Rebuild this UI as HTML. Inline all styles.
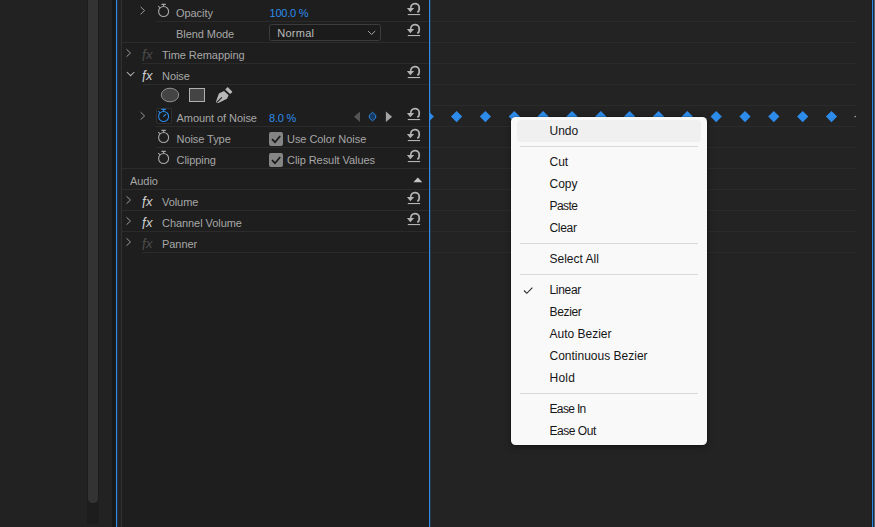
<!DOCTYPE html>
<html><head><meta charset="utf-8"><title>Effect Controls</title>
<style>
html,body{margin:0;padding:0;}
body{width:875px;height:527px;overflow:hidden;background:#222;position:relative;font-family:"Liberation Sans",sans-serif;}
.abs{position:absolute;}
.t{position:absolute;font-size:11px;line-height:16px;white-space:nowrap;letter-spacing:-0.06px;}
.fx{position:absolute;font-size:13px;line-height:18px;font-style:italic;letter-spacing:0.4px;}
.fx .f{display:inline-block;transform:translateY(1.2px) scaleY(1.28);transform-origin:50% 64%;}
#menu{position:absolute;left:511px;top:117px;width:196px;height:328px;background:#f9f9f9;border-radius:4.5px;box-shadow:0 2px 6px rgba(0,0,0,.35),0 0 0 0.5px rgba(0,0,0,.25);}
.mi{position:absolute;left:6px;width:184px;height:22px;line-height:23px;font-size:12px;color:#161616;text-indent:32.5px;border-radius:4px;white-space:nowrap;}
.mi.hl{background:#f0f0f0;}
.sep{position:absolute;left:9px;width:178px;height:1px;background:#d9d9d9;}
</style></head><body>
<div class="abs" style="left:87px;top:0;width:12px;height:524px;background:#1d1d1d"></div>
<div class="abs" style="left:88px;top:-10px;width:10px;height:513px;background:#333;border-radius:4.5px"></div>
<div class="abs" style="left:112px;top:0;width:4px;height:527px;background:#181818"></div>
<div class="abs" style="left:115px;top:0;width:1px;height:527px;background:#211c17"></div>
<div class="abs" style="left:116px;top:0;width:1px;height:527px;background:#2e8ae6"></div>
<div class="abs" style="left:117px;top:0;width:1px;height:527px;background:#23303f"></div>
<div class="abs" style="left:121px;top:0;width:1px;height:527px;background:#303030"></div>
<div class="abs" style="left:122px;top:0;width:307px;height:527px;background:#1e1e1e"></div>
<div class="abs" style="left:430px;top:0;width:442px;height:527px;background:#232323"></div>
<div class="abs" style="left:428px;top:0;width:1px;height:527px;background:#221d18"></div>
<div class="abs" style="left:429px;top:0;width:1px;height:527px;background:#2e8ae6"></div>
<div class="abs" style="left:430px;top:0;width:1px;height:527px;background:#24364d"></div>
<div class="abs" style="left:871px;top:0;width:1px;height:527px;background:#231d17"></div>
<div class="abs" style="left:872px;top:0;width:1px;height:527px;background:#2e8ae6"></div>
<div class="abs" style="left:873px;top:0;width:1px;height:527px;background:#1c2a3a"></div>
<div class="abs" style="left:874px;top:0;width:1px;height:527px;background:#5c606a"></div>
<svg class="abs" style="left:0;top:0" width="875" height="527" viewBox="0 0 875 527">
<rect x="156" y="21" width="273" height="1" fill="#2b2b2b"/><rect x="122" y="42" width="307" height="1" fill="#2b2b2b"/><rect x="142" y="63" width="287" height="1" fill="#2b2b2b"/><rect x="142" y="84" width="287" height="1" fill="#2b2b2b"/><rect x="156" y="126" width="273" height="1" fill="#2b2b2b"/><rect x="156" y="147" width="273" height="1" fill="#2b2b2b"/><rect x="122" y="168" width="307" height="1" fill="#2b2b2b"/><rect x="122" y="189" width="307" height="1" fill="#2b2b2b"/><rect x="122" y="210" width="307" height="1" fill="#2b2b2b"/><rect x="122" y="231" width="307" height="1" fill="#2b2b2b"/><rect x="142" y="252" width="287" height="1" fill="#2b2b2b"/><rect x="431" y="21" width="425" height="1" fill="#2b2b2b"/><rect x="431" y="42" width="425" height="1" fill="#2b2b2b"/><rect x="431" y="63" width="425" height="1" fill="#2b2b2b"/><rect x="431" y="84" width="425" height="1" fill="#2b2b2b"/><rect x="431" y="105" width="425" height="1" fill="#2b2b2b"/><rect x="431" y="126" width="425" height="1" fill="#2b2b2b"/><rect x="431" y="147" width="425" height="1" fill="#2b2b2b"/><rect x="431" y="168" width="425" height="1" fill="#2b2b2b"/><rect x="431" y="189" width="425" height="1" fill="#2b2b2b"/><rect x="431" y="210" width="425" height="1" fill="#2b2b2b"/><rect x="431" y="231" width="425" height="1" fill="#2b2b2b"/><rect x="431" y="252" width="425" height="1" fill="#2b2b2b"/><g transform="translate(0,0)"><path d="M410.8 7.9A4.2 4.2 0 0 1 419.2 7.6V9.3A3.3 3.3 0 0 1 417.3 12.3" fill="none" stroke="#b4b4b4" stroke-width="1.75"/><path d="M406.9 7.9L414.2 8.1L410.3 12.3Z" fill="#b4b4b4"/><rect x="407.8" y="14" width="12.3" height="1.1" fill="#b4b4b4"/></g><g transform="translate(0,21)"><path d="M410.8 7.9A4.2 4.2 0 0 1 419.2 7.6V9.3A3.3 3.3 0 0 1 417.3 12.3" fill="none" stroke="#b4b4b4" stroke-width="1.75"/><path d="M406.9 7.9L414.2 8.1L410.3 12.3Z" fill="#b4b4b4"/><rect x="407.8" y="14" width="12.3" height="1.1" fill="#b4b4b4"/></g><g transform="translate(0,63)"><path d="M410.8 7.9A4.2 4.2 0 0 1 419.2 7.6V9.3A3.3 3.3 0 0 1 417.3 12.3" fill="none" stroke="#b4b4b4" stroke-width="1.75"/><path d="M406.9 7.9L414.2 8.1L410.3 12.3Z" fill="#b4b4b4"/><rect x="407.8" y="14" width="12.3" height="1.1" fill="#b4b4b4"/></g><g transform="translate(0,105)"><path d="M410.8 7.9A4.2 4.2 0 0 1 419.2 7.6V9.3A3.3 3.3 0 0 1 417.3 12.3" fill="none" stroke="#b4b4b4" stroke-width="1.75"/><path d="M406.9 7.9L414.2 8.1L410.3 12.3Z" fill="#b4b4b4"/><rect x="407.8" y="14" width="12.3" height="1.1" fill="#b4b4b4"/></g><g transform="translate(0,126)"><path d="M410.8 7.9A4.2 4.2 0 0 1 419.2 7.6V9.3A3.3 3.3 0 0 1 417.3 12.3" fill="none" stroke="#b4b4b4" stroke-width="1.75"/><path d="M406.9 7.9L414.2 8.1L410.3 12.3Z" fill="#b4b4b4"/><rect x="407.8" y="14" width="12.3" height="1.1" fill="#b4b4b4"/></g><g transform="translate(0,147)"><path d="M410.8 7.9A4.2 4.2 0 0 1 419.2 7.6V9.3A3.3 3.3 0 0 1 417.3 12.3" fill="none" stroke="#b4b4b4" stroke-width="1.75"/><path d="M406.9 7.9L414.2 8.1L410.3 12.3Z" fill="#b4b4b4"/><rect x="407.8" y="14" width="12.3" height="1.1" fill="#b4b4b4"/></g><g transform="translate(0,189)"><path d="M410.8 7.9A4.2 4.2 0 0 1 419.2 7.6V9.3A3.3 3.3 0 0 1 417.3 12.3" fill="none" stroke="#b4b4b4" stroke-width="1.75"/><path d="M406.9 7.9L414.2 8.1L410.3 12.3Z" fill="#b4b4b4"/><rect x="407.8" y="14" width="12.3" height="1.1" fill="#b4b4b4"/></g><g transform="translate(0,210)"><path d="M410.8 7.9A4.2 4.2 0 0 1 419.2 7.6V9.3A3.3 3.3 0 0 1 417.3 12.3" fill="none" stroke="#b4b4b4" stroke-width="1.75"/><path d="M406.9 7.9L414.2 8.1L410.3 12.3Z" fill="#b4b4b4"/><rect x="407.8" y="14" width="12.3" height="1.1" fill="#b4b4b4"/></g><g transform="translate(0,0)" fill="none" stroke="#a8a8a8" stroke-width="1.1"><circle cx="163.6" cy="11.5" r="5"/><path d="M161.4 4.4H165.8M163.6 4.4V6.4M158.2 6.1L159.9 7.6"/></g><g transform="translate(0,126)" fill="none" stroke="#a8a8a8" stroke-width="1.1"><circle cx="163.6" cy="11.5" r="5"/><path d="M161.4 4.4H165.8M163.6 4.4V6.4M158.2 6.1L159.9 7.6"/></g><g transform="translate(0,147)" fill="none" stroke="#a8a8a8" stroke-width="1.1"><circle cx="163.6" cy="11.5" r="5"/><path d="M161.4 4.4H165.8M163.6 4.4V6.4M158.2 6.1L159.9 7.6"/></g><rect x="156.5" y="108.5" width="15" height="15" rx="1.5" fill="#191919" stroke="#303030"/><g transform="translate(0,105)" fill="none" stroke="#2d8ceb" stroke-width="1.1"><circle cx="163.6" cy="11.5" r="5"/><path d="M161.4 4.4H165.8M163.6 4.4V6.4M158.2 6.1L159.9 7.6"/></g><path d="M163.3 116.6L166 114.1" stroke="#2d8ceb" stroke-width="1.2"/><path d="M140.6 6.9l4 3.7l-4 3.7" fill="none" stroke="#9a9a9a" stroke-width="1"/><path d="M126.5 49.3l4 3.7l-4 3.7" fill="none" stroke="#9a9a9a" stroke-width="1"/><path d="M126.9 72l3.7 3.7l3.7 -3.7" fill="none" stroke="#b0b0b0" stroke-width="1.05"/><path d="M140.6 112.2l4 3.7l-4 3.7" fill="none" stroke="#9a9a9a" stroke-width="1"/><path d="M126.5 196.3l4 3.7l-4 3.7" fill="none" stroke="#9a9a9a" stroke-width="1"/><path d="M126.5 217.3l4 3.7l-4 3.7" fill="none" stroke="#9a9a9a" stroke-width="1"/><path d="M126.5 238.3l4 3.7l-4 3.7" fill="none" stroke="#9a9a9a" stroke-width="1"/><ellipse cx="170" cy="95" rx="8.7" ry="6.8" fill="#444" stroke="#9a9a9a" stroke-width="0.9"/><rect x="189.5" y="88.5" width="15" height="13" fill="#444" stroke="#b0b0b0" stroke-width="1"/><path d="M224 91L228.6 95.2L227 98.7L218.4 103Q216.3 103.3 216 101.5L218.9 93.4Z" fill="#b8b8b8"/><path d="M225.2 89.4L227.3 87.3Q227.7 87 228.1 87.4L232.1 91.5Q232.4 91.9 232.1 92.3L230 94.1Z" fill="#b8b8b8"/><path d="M216.9 102.3L221.9 97.3" stroke="#1e1e1e" stroke-width="1.2"/><path d="M354 116.7L360 111.5V122Z" fill="#555"/><path d="M372.5 112.3L375.7 115.2V118L372.5 120.8L369.3 118V115.2Z" fill="#173a63" stroke="#2d8ceb" stroke-width="0.9"/><path d="M392.1 116.7L385.9 111.5V122Z" fill="#a4a4a4"/><rect x="269.5" y="24.5" width="111" height="16" rx="2" fill="#1b1b1b" stroke="#3c3c3c"/><path d="M368 31l3.6 3.5l3.6-3.5" fill="none" stroke="#a4a4a4" stroke-width="1"/><rect x="269" y="132" width="14" height="14" rx="2" fill="#858585"/><path d="M272 139.2l3 3l5.2-6.2" fill="none" stroke="#1a1a1a" stroke-width="1.7"/><rect x="269" y="153" width="14" height="14" rx="2" fill="#858585"/><path d="M272 160.2l3 3l5.2-6.2" fill="none" stroke="#1a1a1a" stroke-width="1.7"/><path d="M413.3 182.3L417.8 177.5L422.3 182.3Z" fill="#c4c4c4"/><rect x="854.6" y="115.9" width="1.2" height="1.3" fill="#bdbdbd"/><g><path d="M430 112.7L433.9 116.6L430 120.5Z" fill="#2d8ceb"/><path d="M451.0 116.6L456.6 111L462.2 116.6L456.6 122.2Z" fill="#2d8ceb"/><path d="M479.8 116.6L485.4 111L491.0 116.6L485.4 122.2Z" fill="#2d8ceb"/><path d="M508.7 116.6L514.3 111L519.9 116.6L514.3 122.2Z" fill="#2d8ceb"/><path d="M537.5 116.6L543.1 111L548.7 116.6L543.1 122.2Z" fill="#2d8ceb"/><path d="M566.4 116.6L572.0 111L577.6 116.6L572.0 122.2Z" fill="#2d8ceb"/><path d="M595.2 116.6L600.8 111L606.4 116.6L600.8 122.2Z" fill="#2d8ceb"/><path d="M624.0 116.6L629.6 111L635.2 116.6L629.6 122.2Z" fill="#2d8ceb"/><path d="M652.9 116.6L658.5 111L664.1 116.6L658.5 122.2Z" fill="#2d8ceb"/><path d="M681.7 116.6L687.3 111L692.9 116.6L687.3 122.2Z" fill="#2d8ceb"/><path d="M710.6 116.6L716.2 111L721.8 116.6L716.2 122.2Z" fill="#2d8ceb"/><path d="M739.4 116.6L745.0 111L750.6 116.6L745.0 122.2Z" fill="#2d8ceb"/><path d="M768.2 116.6L773.8 111L779.4 116.6L773.8 122.2Z" fill="#2d8ceb"/><path d="M797.1 116.6L802.7 111L808.3 116.6L802.7 122.2Z" fill="#2d8ceb"/><path d="M825.9 116.6L831.5 111L837.1 116.6L831.5 122.2Z" fill="#2d8ceb"/></g>
</svg>
<div class="t" style="left:176px;top:5px;color:#a7a7a7;">Opacity</div><div class="t" style="left:269.5px;top:5px;color:#2d8ceb;letter-spacing:-0.22px">100.0 %</div><div class="t" style="left:176px;top:26px;color:#a7a7a7;">Blend Mode</div><div class="t" style="left:277.3px;top:25px;color:#bcbcbc;letter-spacing:0.25px">Normal</div><div class="t" style="left:162px;top:47px;color:#a7a7a7;">Time Remapping</div><div class="t" style="left:162px;top:68px;color:#a7a7a7;">Noise</div><div class="t" style="left:176.5px;top:110px;color:#a7a7a7;">Amount of Noise</div><div class="t" style="left:269px;top:110px;color:#2d8ceb;letter-spacing:-0.2px">8.0 %</div><div class="t" style="left:176.5px;top:131px;color:#a7a7a7;">Noise Type</div><div class="t" style="left:287px;top:131px;color:#a7a7a7;">Use Color Noise</div><div class="t" style="left:176.5px;top:152px;color:#a7a7a7;">Clipping</div><div class="t" style="left:287px;top:152px;color:#a7a7a7;">Clip Result Values</div><div class="t" style="left:130px;top:173px;color:#a7a7a7;">Audio</div><div class="t" style="left:162px;top:194px;color:#a7a7a7;">Volume</div><div class="t" style="left:162px;top:215px;color:#a7a7a7;">Channel Volume</div><div class="t" style="left:162px;top:236px;color:#a7a7a7;">Panner</div><div class="fx" style="left:142px;top:45.5px;color:#4c4c4c"><span class="f">f</span>x</div><div class="fx" style="left:142px;top:66.5px;color:#cfcfcf"><span class="f">f</span>x</div><div class="fx" style="left:142px;top:192.5px;color:#cfcfcf"><span class="f">f</span>x</div><div class="fx" style="left:142px;top:213.5px;color:#cfcfcf"><span class="f">f</span>x</div><div class="fx" style="left:142px;top:234.5px;color:#4c4c4c"><span class="f">f</span>x</div>
<div id="menu">
<div class="mi hl" style="top:3px">Undo</div><div class="sep" style="top:29px"></div><div class="mi " style="top:34px">Cut</div><div class="mi " style="top:56px">Copy</div><div class="mi " style="top:78px;letter-spacing:-0.55px">Paste</div><div class="mi " style="top:100px;letter-spacing:-0.32px">Clear</div><div class="sep" style="top:126px"></div><div class="mi " style="top:131px">Select All</div><div class="sep" style="top:157px"></div><div class="mi " style="top:162px;letter-spacing:-0.3px">Linear</div><div class="mi " style="top:184px;letter-spacing:-0.35px">Bezier</div><div class="mi " style="top:206px">Auto Bezier</div><div class="mi " style="top:228px">Continuous Bezier</div><div class="mi " style="top:250px;letter-spacing:0.25px">Hold</div><div class="sep" style="top:276px"></div><div class="mi " style="top:281px;letter-spacing:-0.65px">Ease In</div><div class="mi " style="top:303px;letter-spacing:-0.47px">Ease Out</div>
<svg class="abs" style="left:0;top:0" width="196" height="328"><path d="M13 173.5l2.8 2.8l5.6-5.6" fill="none" stroke="#2a2a2a" stroke-width="1.1"/></svg>
</div>
</body></html>
